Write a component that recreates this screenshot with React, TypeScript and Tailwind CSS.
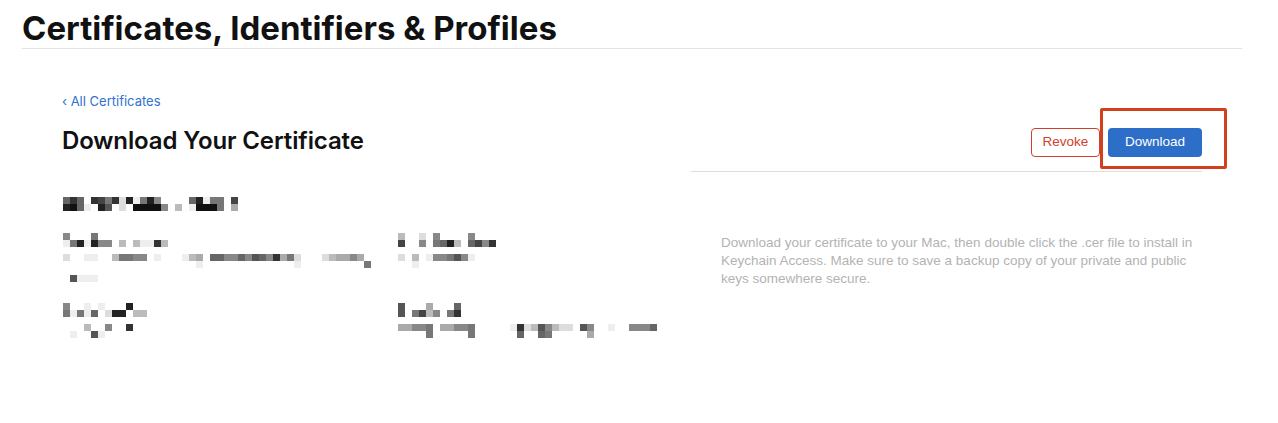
import React from 'react';

// shades used by the pixelated (redacted) blocks
const shade: Record<string, string> = {
  '0': 'bg-transparent',
  a: 'bg-[#eeeeee]',
  b: 'bg-[#dddddd]',
  c: 'bg-[#bbbbbb]',
  d: 'bg-[#aaaaaa]',
  e: 'bg-[#888888]',
  f: 'bg-[#777777]',
  g: 'bg-[#666666]',
  h: 'bg-[#555555]',
  i: 'bg-[#444444]',
  j: 'bg-[#333333]',
  k: 'bg-[#222222]',
  l: 'bg-[#111111]',
};

function Mosaic({ rows }: { rows: string[] }) {
  return (
    <div className="flex flex-col">
      {rows.map((row, r) => (
        <div key={r} className="flex">
          {row.split('').map((c, i) => (
            <div key={i} className={`w-[7px] h-[7px] ${shade[c]}`} />
          ))}
        </div>
      ))}
    </div>
  );
}

const nameRows = ['gjg0jifjbkafke0000gkaff0i', 'klga0kh0b0lllle0c0alllf0d'];

const fields: string[][] = [
  [
    'e000f',
    'afkakee0c0caajc',
    '0',
    'b00aa00cffee0a000acd0ggeegehgejdfb000bcdded0',
    '0000000000000000000a0000000000000a000000000f',
    '0',
    '0haaa',
  ],
  ['c00b0e0000e', 'i00e0fgkc0giej', '0', 'b0c0aeefhea', '00a'],
  ['e00a0a000k', 'fafag0bkk0cc', '0', '000c00e00j', '0a00ha'],
  [
    'h000d000g',
    'h0fice0fj',
    '0',
    'ddeef0ddeef00000ajbchecbb0he00a00eeeg',
    '0000f00000f000000g00gf00000d',
  ],
];

export default function App() {
  return (
    <div className="w-[1278px] h-[423px] bg-white overflow-hidden font-['Inter',sans-serif] text-[#1d1d1f]">
      <header className="ml-[22px] w-[1220px] pt-[12px] pb-[3px] border-b border-[#e3e3e3]">
        <h1 className="text-[33px] leading-none font-bold tracking-normal text-[#111111]">
          Certificates, Identifiers &amp; Profiles
        </h1>
      </header>

      <main className="ml-[62px] w-[1140px]">
        <a className="block mt-[42px] text-[13px] leading-[20px] text-[#2f72d0]">
          ‹ All Certificates
        </a>

        <div className="mt-[18px] flex items-start justify-between">
          <h2 className="text-[24px] leading-none font-semibold tracking-[-0.005em] text-[#111111]">
            Download Your Certificate
          </h2>
          <div className="mt-[-1px] mb-[14px] flex gap-[8px] font-['Liberation_Sans',sans-serif] text-[13.5px]">
            <button className="h-[29px] w-[69px] rounded-[4px] border border-[#d0402b] text-[#d0402b]">
              Revoke
            </button>
            <div className="relative">
              <button className="h-[29px] w-[94px] rounded-[4px] bg-[#2d6ec8] text-white">
                Download
              </button>
              <div className="absolute left-[-8px] top-[-20px] w-[127px] h-[61px] border-[3px] border-[#d3401f] rounded-[2px]" />
            </div>
          </div>
        </div>

        <div className="grid grid-cols-[629px_1fr]">
          <div className="pt-[26px] pl-px">
            <Mosaic rows={nameRows} />
            <div className="mt-[22px] grid grid-cols-[335px_1fr] gap-y-[21px]">
              {fields.map((rows, i) => (
                <Mosaic key={i} rows={rows} />
              ))}
            </div>
          </div>
          <div className="border-t border-[#dedede] pt-[62px] pl-[30px]">
            <p className="font-['Liberation_Sans',sans-serif] text-[13.5px] leading-[18px] text-[#b3b3b3]">
              Download your certificate to your Mac, then double click the .cer file to install in
              Keychain Access. Make sure to save a backup copy of your private and public keys
              somewhere secure.
            </p>
          </div>
        </div>
      </main>
    </div>
  );
}
